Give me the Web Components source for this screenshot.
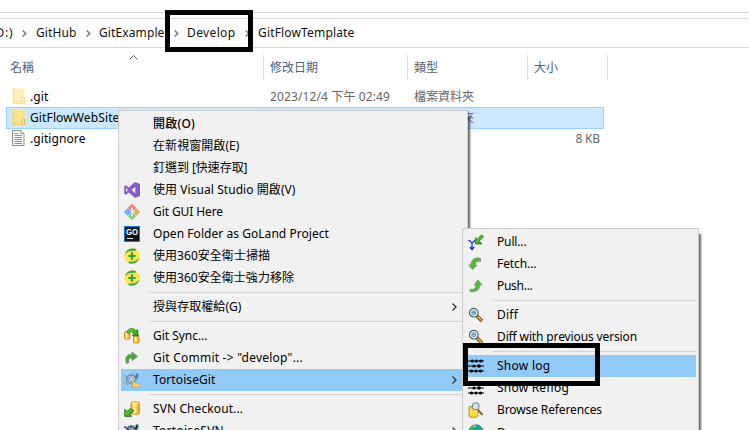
<!DOCTYPE html>
<html lang="zh-Hant">
<head>
<meta charset="utf-8">
<title>File Explorer</title>
<style>
html,body{margin:0;height:100%;overflow:hidden;background:#fff}
body{font:12px/20px "Noto Sans","Noto Sans CJK TC",sans-serif;color:#000}
</style>
</head>
<body>
<file-explorer></file-explorer>
<script>
const define = (name, html, setup) => customElements.define(name, class extends HTMLElement {
  connectedCallback() {
    if (this.shadowRoot) return;
    const t = document.createElement('template');
    t.innerHTML = html;
    this.attachShadow({mode: 'open'}).append(t.content.cloneNode(true));
    if (setup) setup(this, this.shadowRoot);
  }
});

/* Text run tracked out to a given width in px */
define('ui-text', `<style>:host{display:inline-block;white-space:pre}span{display:inline-block}</style><span><slot></slot></span>`, (el, root) => {
  const w = parseFloat(el.getAttribute('w'));
  if (!w) return;
  const s = root.querySelector('span');
  const have = s.getBoundingClientRect().width;
  s.style.letterSpacing = ((w - have) / [...el.textContent].length) + 'px';
});

const defsGreen = `<linearGradient id="g" x1="0" y1="0" x2="1" y2="1"><stop offset="0" stop-color="#7be038"/><stop offset="1" stop-color="#1f9410"/></linearGradient><linearGradient id="y"><stop offset="0" stop-color="#f3b32a"/><stop offset=".4" stop-color="#ffef9a"/><stop offset="1" stop-color="#e9a417"/></linearGradient>`;
const lens = `<path d="M9 9l5 5" stroke="#5d3a06" stroke-width="3.4"/><path d="M9.5 9.3l4.300 4.300" stroke="#eeb53a" stroke-width="1.800"/><circle cx="5.800" cy="5.700" r="4.300" fill="#dff3fb" stroke="#50606a" stroke-width="1.200"/><circle cx="5.800" cy="5.700" r="2" fill="#b4dcef" stroke="#5c8fb0"/><path d="M4.800 5.700h2" stroke="#37627c"/>`;
const turtle = (a, b) => `<ellipse cx="7.3" cy="7" rx="5" ry="4.2" fill="${a}" stroke="${b}" stroke-width=".8"/><path d="M5 4l2 3-2 3M9 4L7 7l3 3M7 7h4" stroke="#dbe4ef" stroke-width=".8" fill="none"/><path d="M11 6l2-1M13 1.5v4" stroke="${b}" stroke-width="2.6"/><path d="M3 9.5l-2.5 3M9 11l-1 3M2.5 5L0 3.5M4 11l-.5 2.5" stroke="${a}" stroke-width="1.8"/>`;
const icons = {
  vs: `<path d="M11 0l5 2v12l-5 2-6.2-5.6L2 12.8.3 12V4L2 3.2l2.8 2.4zM11.3 4.8L7.6 8l3.7 3.2zM2 6v4l2-2z" fill="#865fc5" fill-rule="evenodd"/>`,
  git: `<g transform="rotate(45 8 8)"><rect x="2.2" y="2.2" width="5.600" height="5.600" rx=".6" fill="#f67a78"/><rect x="8.2" y="2.2" width="5.600" height="5.600" rx=".6" fill="#ddb160"/><rect x="2.2" y="8.2" width="5.600" height="5.600" rx=".6" fill="#76adff"/><rect x="8.2" y="8.2" width="5.600" height="5.600" rx=".6" fill="#76cf73"/></g><path d="M8 4.500v7M8 6l3 2.500" stroke="#fff" stroke-width="1"/><circle cx="8" cy="4.500" r="1" fill="#fff"/><circle cx="8" cy="11.500" r="1" fill="#fff"/>`,
  go: `<rect width="16" height="16" fill="#087cd8"/><rect x="1" y="1" width="14" height="14" fill="#101418"/><path d="M3 12.500h6" stroke="#fff" stroke-width="1"/><text x="8" y="8.700" text-anchor="middle" textLength="12" lengthAdjust="spacingAndGlyphs" font-family="Liberation Sans" font-weight="bold" font-size="8.500" fill="#fff">GO</text>`,
  safe: `<circle cx="8" cy="8" r="7.7" fill="#ffe44e"/><path d="M1 6.5A7.7 7.7 0 0 1 12.5 1.5L11 3C7 2 3 3 1 6.500z" fill="#3da53f"/><path d="M15.5 9.5A7.7 7.7 0 0 1 4 14.700L5.500 13.200c4 .8 7.500-.2 10-3.700z" fill="#47ae38"/><path d="M8 4.300v7.400M4.300 8h7.400" stroke="#34a044" stroke-width="2.200"/>`,
  sync: `<rect x=".5" y="3.500" width="5.500" height="7.500" rx="1.200" fill="url(#y)" stroke="#b98210" stroke-width=".8"/><rect x="9.500" y="8" width="5.500" height="7" rx="1.200" fill="url(#y)" stroke="#b98210" stroke-width=".8"/><path d="M3 4.500c1-5 7-5 9-1.500L13.500 1.500l.7 6.500-6-.3 1.600-2C8.300 3.400 6 3.200 4.700 5.500z" fill="url(#g)" stroke="#1b7410" stroke-width=".8"/>`,
  commit: `<path d="M2.500 13.500C.5 7.500 3 4 8 4.500V2L13.500 6.500 8 10.500V8C5 7.500 4 9.500 4.800 12.500z" fill="#42ad32" stroke="#7e8c7c" stroke-width=".9"/>`,
  tgit: turtle('#91a9c5', '#5c7896') + `<path d="M8.500 10.500h3l1 1H15.500v3.500h-7z" fill="#f6cf72" stroke="#cfa14a" stroke-width=".7"/>`,
  tsvn: turtle('#536783', '#263e5b'),
  checkout: `<rect x="7" y=".8" width="8.300" height="12.500" rx="2" fill="url(#y)" stroke="#bf850d" stroke-width=".8"/><ellipse cx="11.100" cy="2.300" rx="3.300" ry="1.100" fill="#ffe990"/><path d="M.8 15.300V8.500l2 1.700C4.500 9.700 5.600 9 6.500 7.500L9.500 9.500C8.500 11.500 7.200 12.500 5.500 13l2 2.300z" fill="url(#g)" stroke="#176f10"/>`,
  pull: `<path d="M.500 6l3.500 3L7.500 6M4 8.500V15.500M1.800 13L4 15.500l2.200-2.500" fill="none" stroke="#1621df" stroke-width="1.200"/><path d="M7.500 10V3.500l1.800 1.800L13.500.8l2 2L11.300 7l2.700 3z" fill="url(#g)" stroke="#23750f" stroke-width=".8"/>`,
  fetch: `<path d="M4.500 13.500L.8 9H3C3.500 3 7 1 12.500 2.500V5.500C9 4.500 7.300 6 7.200 9H9z" fill="#4abf33" stroke="#849681"/>`,
  push: `<path d="M10 2l4 5h-2.200C11.800 12 8 14.500 2 13.500v-2.200C6 12 7.800 10.500 7.800 7H6z" fill="#4abf33" stroke="#849681" stroke-width=".9"/>`,
  diff: lens,
  log: `<path d="M0 3h16M0 8h16M0 13h16" stroke="#000" stroke-width="1"/><g fill="#000"><circle cx="4.300" cy="3" r="1.600"/><circle cx="8.300" cy="3" r="1.600"/><circle cx="12.800" cy="3" r="1.600"/><circle cx="6" cy="8" r="1.600"/><circle cx="11" cy="8" r="1.800"/><circle cx="3.500" cy="13" r="1.600"/><circle cx="8" cy="13" r="1.600"/><circle cx="12.500" cy="13" r="1.600"/></g>`,
  refs: `<path d="M1 4.500h3v1h6V14l-2 1.300H3L1 14z" fill="#f8d23a" stroke="#b7830b" stroke-width=".8"/><path d="M3 8v5M5.500 9v5M8 8v5" stroke="#fff09b"/><path d="M10 8l4.500 5" stroke="#7a6540" stroke-width="2"/><rect x="4.500" y="1" width="6.500" height="6.500" rx="2" fill="#cfe3ee" stroke="#737c85"/>`,
  globe: `<circle cx="8" cy="8" r="7.300" fill="#238fd3" stroke="#176a9e" stroke-width=".6"/><path d="M2 4c2-3 5-3.500 7-3l-1 3-3 1v3L2 9zM10 4l3-1 2 4-1 4-3-1z" fill="#35bd43"/><path d="M5 2l3-.5L7 3z" fill="#d6ffe3"/>`,
  folder: `<path d="M1 .5h11.500v10.500l.5 1v4H1z" fill="#ffe591"/><path d="M.5.5H3v15.500H.5z" fill="#f9d878"/><path d="M.5 15.500H10" stroke="#f3ce69"/><rect x="9.700" y="9.500" width="3" height="6.300" rx=".8" fill="#ffe999" stroke="#e9b93e" stroke-width=".9"/>`,
  file: `<path d="M.5.500h8.500l3 3v12H.5z" fill="#fbfbfb" stroke="#8d8d8d"/><path d="M9 .5v3h3" fill="#fff" stroke="#8d8d8d"/><path d="M2.500 3.500h4M2.500 5.500h7.500M2.500 7.500h7.500M2.500 9.500h7.500M2.500 11.500h7.500M2.500 13.500h7.500" stroke="#858585" stroke-width=".9"/>`,
  chevron: `<path d="M.5 3.500l3.500 3.500L.5 10.500" fill="none" stroke="#333" stroke-width="1.300"/>`,
  crumb: `<path d="M.7 5.500l3 3-3 3" fill="none" stroke="#777" stroke-width="1.500"/>`,
  caret: `<path d="M.5 4.500L4.500.500 8.500 4.500" fill="none" stroke="#666"/>`
};
define('ui-icon', `<style>:host{display:block;flex:none;width:16px;height:16px}svg{display:block;overflow:visible}</style>`, (el, root) => {
  root.innerHTML += `<svg width="16" height="16" viewBox="0 0 16 16" fill="none"><defs>${defsGreen}</defs>${icons[el.getAttribute('name')] || ''}</svg>`;
});

define('menu-item', `<style>
:host{display:flex;align-items:center;height:22px;box-sizing:border-box;padding-left:3px}
:host([active]){background:#91c9f7}
.i{width:16px;margin-right:13px}.label{flex:1;height:20px}
ui-icon.arrow{width:6px;height:14px;margin-right:7px}
</style><div class="i"></div><div class="label"><slot></slot></div>`, (el, root) => {
  const name = el.getAttribute('icon');
  if (name) root.querySelector('.i').innerHTML = `<ui-icon name="${name}"></ui-icon>`;
  if (el.hasAttribute('sub')) root.querySelector('.label').insertAdjacentHTML('afterend', '<ui-icon class="arrow" name="chevron"></ui-icon>');
});
define('menu-separator', `<style>:host{display:block;height:7px;box-sizing:border-box;padding:3px 0 0 28px}div{height:1px;background:#d3d3d3}</style><div></div>`);
define('context-menu', `<style>
:host{display:block;box-sizing:border-box;background:#f1f1f1;border:1px solid #ccc;padding:2px;box-shadow:4px 4px 2px -2px #0009}
</style><slot></slot>`);

define('bread-crumbs', `<style>
:host{display:block;height:36px;box-sizing:border-box;padding-top:5px;margin-top:12px;border-top:1px solid #d9d9d9;border-bottom:1px solid #d9d9d9}
.bar{display:flex;align-items:center;height:29px;box-sizing:border-box;border-top:1px solid #d9d9d9;color:#111}
.bar>ui-text{flex:none}
ui-icon{width:5px}
</style><div class="bar">
<ui-text w="18" style="margin-left:-4.500px">D:)</ui-text><ui-icon name="crumb" style="margin:0 9px 0 8.500px"></ui-icon>
<ui-text w="40.500">GitHub</ui-text><ui-icon name="crumb" style="margin:0 8px 0 9.500px"></ui-icon>
<ui-text w="65.500">GitExample</ui-text><ui-icon name="crumb" style="margin:0 8px 0 9.500px"></ui-icon>
<ui-text w="48.500">Develop</ui-text><ui-icon name="crumb" style="margin:0 8px 0 9.500px"></ui-icon>
<ui-text w="96.500">GitFlowTemplate</ui-text></div>`);

define('column-header', `<style>
:host{display:grid;grid-template-columns:264px 144px 120px 80px;height:25px;margin-top:7px;color:#4c607a}
div{position:relative;border-right:1px solid #e0e0e0;padding:3px 0 0 6px}
div:first-of-type{padding-left:10px}
ui-icon{position:absolute;left:129px;top:0;height:6px}
</style><div><ui-text>名稱</ui-text><ui-icon name="caret"></ui-icon></div><div><ui-text>修改日期</ui-text></div><div><ui-text>類型</ui-text></div><div><ui-text>大小</ui-text></div>`);

define('file-row', `<style>
:host{display:grid;grid-template-columns:24px 240px 144px 120px 1fr;height:22px;width:598px;margin-left:6px;box-sizing:border-box;border:1px solid transparent;color:#666}
:host([selected]){background:#cce8ff;border-color:#99d1ff}
ui-icon{margin:1px 0 0 5px}
:host([hidden-file]) ui-icon{opacity:.6}
.name{color:#000}.name,.date,.type{margin-left:-1px}.size{text-align:right;padding-right:3px}
</style><ui-icon></ui-icon><div class="name"><slot name="name"></slot></div><div class="date"><slot name="date"></slot></div><div class="type"><slot name="type"></slot></div><div class="size"><slot name="size"></slot></div>`, (el, root) => {
  const i = document.createElement('ui-icon');
  i.setAttribute('name', el.getAttribute('icon'));
  root.querySelector('ui-icon').replaceWith(i);
});

define('highlight-frame', `<style>:host{display:block;position:absolute;box-sizing:border-box;border:5px solid #000}</style>`);

define('file-explorer', `<style>
:host{display:flow-root;position:relative;width:749px;height:430px;overflow:hidden}
.rows{padding-top:6px}
file-row+file-row{margin-top:-1px}
.main{position:absolute;left:118px;top:110px;width:350px;height:340px}
.sub{position:absolute;left:462px;top:228px;width:237px;height:230px}
</style>
<bread-crumbs></bread-crumbs>
<column-header></column-header>
<div class="rows">
<file-row icon="folder" hidden-file><ui-text slot="name" w="18.500">.git</ui-text><ui-text slot="date" w="120">2023/12/4 下午 02:49</ui-text><ui-text slot="type">檔案資料夾</ui-text></file-row>
<file-row icon="folder" selected><ui-text slot="name" w="89.500">GitFlowWebSite</ui-text><ui-text slot="type">檔案資料夾</ui-text></file-row>
<file-row icon="file"><ui-text slot="name" w="55.500">.gitignore</ui-text><ui-text slot="size" w="24.500">8 KB</ui-text></file-row>
</div>
<context-menu class="main">
<menu-item><ui-text w="42" style="font-weight:500">開啟(O)</ui-text></menu-item>
<menu-item><ui-text w="86.500">在新視窗開啟(E)</ui-text></menu-item>
<menu-item><ui-text w="94.500">釘選到 [快速存取]</ui-text></menu-item>
<menu-item icon="vs"><ui-text w="142.500">使用 Visual Studio 開啟(V)</ui-text></menu-item>
<menu-item icon="git"><ui-text w="70">Git GUI Here</ui-text></menu-item>
<menu-item icon="go"><ui-text w="176">Open Folder as GoLand Project</ui-text></menu-item>
<menu-item icon="safe"><ui-text w="117">使用360安全衛士掃描</ui-text></menu-item>
<menu-item icon="safe"><ui-text w="141">使用360安全衛士強力移除</ui-text></menu-item>
<menu-separator></menu-separator>
<menu-item sub><ui-text w="88.500">授與存取權給(G)</ui-text></menu-item>
<menu-separator></menu-separator>
<menu-item icon="sync"><ui-text w="54.500">Git Sync...</ui-text></menu-item>
<menu-item icon="commit"><ui-text w="150">Git Commit -&gt; "develop"...</ui-text></menu-item>
<menu-item icon="tgit" active sub><ui-text w="62.500">TortoiseGit</ui-text></menu-item>
<menu-separator></menu-separator>
<menu-item icon="checkout"><ui-text w="90">SVN Checkout...</ui-text></menu-item>
<menu-item icon="tsvn" sub><ui-text w="71">TortoiseSVN</ui-text></menu-item>
</context-menu>
<context-menu class="sub">
<menu-item icon="pull"><ui-text w="29.500">Pull...</ui-text></menu-item>
<menu-item icon="fetch"><ui-text w="39.500">Fetch...</ui-text></menu-item>
<menu-item icon="push"><ui-text w="35.500">Push...</ui-text></menu-item>
<menu-separator></menu-separator>
<menu-item icon="diff"><ui-text w="21">Diff</ui-text></menu-item>
<menu-item icon="diff"><ui-text w="140">Diff with previous version</ui-text></menu-item>
<menu-separator></menu-separator>
<menu-item icon="log" active><ui-text w="53.500">Show log</ui-text></menu-item>
<menu-item icon="log"><ui-text w="72">Show Reflog</ui-text></menu-item>
<menu-item icon="refs"><ui-text w="105">Browse References</ui-text></menu-item>
<menu-item icon="globe"><ui-text w="45" style="padding-top:1px">Daemon</ui-text></menu-item>
</context-menu>
<highlight-frame style="left:165px;top:10px;width:88px;height:42px"></highlight-frame>
<highlight-frame style="left:463px;top:343px;width:137px;height:43px"></highlight-frame>`);
</script>
</body>
</html>
